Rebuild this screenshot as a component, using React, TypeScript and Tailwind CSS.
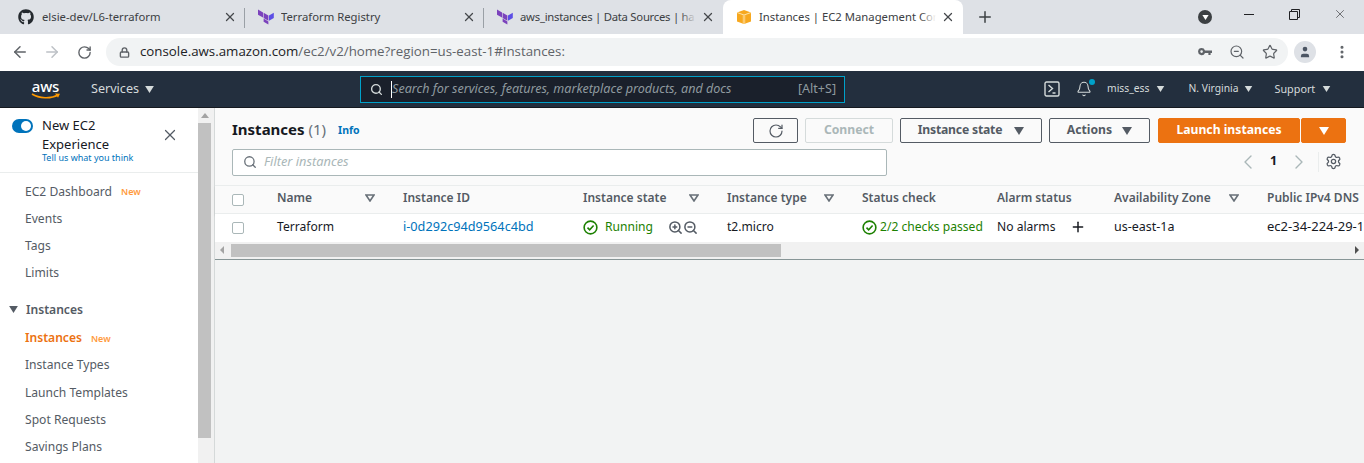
import {
  ArrowLeft,
  ArrowRight,
  Bell,
  ChevronLeft,
  ChevronRight,
  Lock,
  MoreVertical,
  Plus,
  RotateCw,
  Search,
  Settings,
  Star,
  User,
  X,
  ZoomIn,
  ZoomOut,
} from 'lucide-react';
import { FaGithub } from 'react-icons/fa';
import type { ReactNode } from 'react';

const TerraformIcon = () => (
  <svg width="16" height="16" viewBox="0 0 16 16" className="shrink-0">
    <path d="M0 0.500l5 2.900v5.200L0 5.700z" fill="#7b42bc" />
    <path d="M5.600 3.700l4.800 2.800v5.200L5.600 8.900z" fill="#7b42bc" />
    <path d="M5.600 9.600l4.800 2.800v3.100L5.600 12.700z" fill="#7b42bc" />
    <path d="M11 6.500l4.800-2.800v5.200L11 11.700z" fill="#5c4ee5" />
  </svg>
);

const BoxIcon = () => (
  <svg width="16" height="16" viewBox="0 0 16 16" className="shrink-0">
    <path d="M1 3.500L8 1l7 2.500v9L8 15l-7-2.500z" fill="#f7a81f" />
    <path d="M1 3.500L8 6l7-2.500" fill="none" stroke="#fde3a8" strokeWidth="1" />
    <path d="M6.700 6v9h2.600V6z" fill="#fbc970" />
  </svg>
);

const KeyIcon = () => (
  <svg width="14" height="8" viewBox="0 0 14 8" className="shrink-0">
    <path d="M3.600 0a3.600 3.600 0 0 1 3.400 2.400h7V5h-1.400v2h-2.200V5H7a3.600 3.600 0 1 1-3.400-5zm0 2.300a1.300 1.300 0 1 0 0 2.600 1.300 1.300 0 0 0 0-2.600z" fill="currentColor" />
  </svg>
);

const Caret = ({ className }: { className: string }) => (
  <svg width="10" height="8" viewBox="0 0 10 8" className={className}>
    <path d="M0 0h10L5 8z" fill="currentColor" />
  </svg>
);

const SortIcon = () => (
  <svg width="10" height="8" viewBox="0 0 10 8" className="shrink-0 text-[#687078]">
    <path d="M1 1h8L5 7z" fill="none" stroke="currentColor" strokeWidth="1.600" />
  </svg>
);

const CheckCircle = () => (
  <svg width="15" height="15" viewBox="0 0 16 16" className="shrink-0" fill="none" stroke="#1d8102" strokeWidth="1.700">
    <circle cx="8" cy="8" r="6.800" />
    <path d="M4.800 8.200l2.300 2.300 4.200-4.600" />
  </svg>
);

type TabProps = { icon: ReactNode; title: string; active?: boolean; fade?: boolean; tight?: boolean; width: string; divider?: boolean };

const Tab = ({ icon, title, active, fade, tight, width, divider }: TabProps) => (
  <div className={`${width} relative flex h-[34px] shrink-0 items-center pl-[13px] pr-[8px] ${active ? 'rounded-t-[8px] bg-white' : ''}`}>
    {icon}
    <div className={`relative ml-[7px] min-w-0 flex-1 overflow-hidden whitespace-nowrap text-[11.300px] text-[#3c4043] ${tight ? 'tracking-[-0.250px]' : ''}`}>
      {title}
      {fade && (
        <div className={`absolute inset-y-0 right-0 w-[16px] bg-gradient-to-r from-transparent ${active ? 'to-white' : 'to-[#dee1e6]'}`} />
      )}
    </div>
    <X size={14} strokeWidth={2.200} className="ml-[5px] shrink-0 text-[#45484c]" />
    {divider && <div className="absolute right-0 top-[8px] h-[20px] w-px bg-[#9aa0a6]" />}
  </div>
);

const TabStrip = () => (
  <div className="flex h-[34px] items-center bg-[#dee1e6]">
    <Tab width="w-[245px]" divider icon={<div className="ml-[5px] mr-[1px]"><FaGithub size={16} className="text-[#24292e]" /></div>} title="elsie-dev/L6-terraform" />
    <Tab width="w-[239px]" divider icon={<TerraformIcon />} title="Terraform Registry" />
    <Tab width="w-[239px]" fade tight icon={<TerraformIcon />} title="aws_instances | Data Sources | ha" />
    <Tab width="w-[240px]" active fade icon={<BoxIcon />} title="Instances | EC2 Management Con" />
    <Plus size={18} strokeWidth={2} className="ml-[13px] text-[#3c4043]" />
    <div className="ml-auto flex items-center">
      <div className="mr-[32px] flex h-[14px] w-[14px] items-center justify-center rounded-full bg-[#3c4043]">
        <Caret className="h-[5px] w-[7px] text-white" />
      </div>
      <div className="mb-[6px] h-px w-[10px] bg-[#202124]" />
      <svg width="11" height="11" viewBox="0 0 11 11" className="mb-[6px] ml-[35px]" fill="none" stroke="#202124">
        <path d="M0.500 2.500h8v8h-8zM2.500 2.500v-2h8v8h-2" />
      </svg>
      <X size={14} strokeWidth={1} className="mb-[6px] ml-[33px] mr-[17px] text-[#202124]" />
    </div>
  </div>
);

const AddressBar = () => (
  <div className="flex h-[37px] items-center border-b border-[#ffffff] bg-white">
    <ArrowLeft size={18} strokeWidth={2} className="ml-[11px] text-[#5f6368]" />
    <ArrowRight size={18} strokeWidth={2} className="ml-[14px] text-[#bdc1c6]" />
    <RotateCw size={15} strokeWidth={2.200} className="ml-[16px] text-[#5f6368]" />
    <div className="ml-[14px] flex h-[28px] w-[1182px] items-center rounded-full bg-[#f1f3f4] pl-[13px] pr-[10px]">
      <Lock size={11} strokeWidth={3} className="text-[#5f6368]" />
      <div className="ml-[10px] whitespace-nowrap text-[13.300px] text-[#5f6368] [font-family:'Open_Sans',sans-serif]">
        <span className="text-[#202124]">console.aws.amazon.com</span>/ec2/v2/home?region=us-east-1#Instances:
      </div>
      <div className="ml-auto flex items-center gap-[17px] text-[#5f6368]">
        <KeyIcon />
        <ZoomOut size={16} strokeWidth={1.800} />
        <Star size={16} strokeWidth={1.800} />
      </div>
    </div>
    <div className="ml-[6px] flex h-[22px] w-[22px] items-center justify-center rounded-full bg-[#dee1e6]">
      <User size={14} fill="#4b5563" strokeWidth={0} />
    </div>
    <MoreVertical size={16} strokeWidth={2.600} className="ml-[18px] text-[#5f6368]" />
  </div>
);

const TopNav = () => (
  <div className="flex h-[37px] items-center border-b border-[#15191f] bg-[#232f3e] text-[#d5dbdb]">
    <div className="ml-[29px] flex w-[33px] flex-col items-center">
      <div className="h-[14px] text-[15px] font-medium leading-[14px] tracking-[-0.200px] text-white">aws</div>
      <svg width="30" height="7" viewBox="0 0 30 7">
        <path d="M1 1c7 4.500 19 5 26 1" fill="none" stroke="#f90" strokeWidth="1.600" />
        <path d="M24 0.500l5 0.300-2 4z" fill="#f90" />
      </svg>
    </div>
    <div className="ml-[29px] text-[12.600px]">Services</div>
    <Caret className="ml-[6px] h-[7px] w-[9px] text-[#d5dbdb]" />
    <div className="ml-[206px] flex h-[27px] w-[485px] items-center border border-[#00a1c9] bg-[#1a202b] pl-[9px] pr-[8px] text-[12.550px]">
      <Search size={13} strokeWidth={2.500} className="text-[#d5dbdb]" />
      <div className="ml-[8px] h-[17px] w-px bg-white" />
      <span className="italic text-[#8f9a9f]">Search for services, features, marketplace products, and docs</span>
      <span className="ml-auto text-[#8f9a9f]">[Alt+S]</span>
    </div>
    <svg width="16" height="16" viewBox="0 0 16 16" className="ml-[199px]" fill="none" stroke="#d5dbdb" strokeWidth="1.400">
      <rect x="1" y="1" width="14" height="14" rx="1.500" />
      <path d="M4.500 4l4 3.500-4 3.500M8.500 12h3" />
    </svg>
    <div className="relative ml-[16px] flex">
      <Bell size={16} strokeWidth={1.600} />
      <div className="absolute right-[-3px] top-[-2px] h-[6px] w-[6px] rounded-full bg-[#00a1c9]" />
    </div>
    <div className="ml-[15px] text-[10.300px]">miss_ess</div>
    <Caret className="ml-[7px] h-[6px] w-[9px] text-[#d5dbdb]" />
    <div className="ml-[23px] text-[10.300px]">N. Virginia</div>
    <Caret className="ml-[5px] h-[6px] w-[9px] text-[#d5dbdb]" />
    <div className="ml-[22px] text-[10.800px]">Support</div>
    <Caret className="ml-[7px] h-[6px] w-[9px] text-[#d5dbdb]" />
  </div>
);

const NavLink = ({ label, badge, active }: { label: string; badge?: boolean; active?: boolean }) => (
  <div className="flex h-[27.200px] items-center pl-[25px] text-[12.100px]">
    <span className={active ? 'font-semibold text-[#ec7211]' : 'text-[#545b64]'}>{label}</span>
    {badge && <span className="ml-[9px] text-[9px] font-semibold text-[#ff9a3c]">New</span>}
  </div>
);

const Sidebar = () => (
  <div className="flex w-[215px] shrink-0">
    <div className="h-full w-[198px] bg-white">
      <div className="relative h-[65px] border-b border-[#eaeded] pl-[12px] pt-[8px]">
        <div className="flex">
          <div className="mt-[3px] flex h-[14px] w-[21px] items-center justify-end rounded-full bg-[#0073bb] pr-[2px]">
            <div className="h-[10px] w-[10px] rounded-full bg-white" />
          </div>
          <div className="ml-[9px] text-[13px] leading-[18.500px] text-[#16191f]">
            New EC2
            <br />
            Experience
            <div className="text-[9px] leading-[10px] text-[#0073bb]">Tell us what you think</div>
          </div>
        </div>
        <X size={18} strokeWidth={1.600} className="absolute right-[19px] top-[18px] text-[#545b64]" />
      </div>
      <div className="pt-[5px]">
        <NavLink label="EC2 Dashboard" badge />
        <NavLink label="Events" />
        <NavLink label="Tags" />
        <NavLink label="Limits" />
      </div>
      <div className="mb-px mt-[9px] flex h-[28px] items-center pl-[9px] text-[12.100px] font-semibold text-[#545b64]">
        <Caret className="mr-[8px] h-[7px] w-[9px] text-[#545b64]" />
        Instances
      </div>
      <NavLink label="Instances" badge active />
      <NavLink label="Instance Types" />
      <NavLink label="Launch Templates" />
      <NavLink label="Spot Requests" />
      <NavLink label="Savings Plans" />
    </div>
    <div className="flex h-full w-[17px] flex-col items-center border-r border-[#d5d9d9] bg-[#f1f1f1] pr-[3px]">
      <svg width="8" height="5" viewBox="0 0 8 5" className="mt-[5px] shrink-0">
        <path d="M4 0l4 5H0z" fill="#a3a3a3" />
      </svg>
      <div className="mt-[5px] h-[315px] w-[13px] bg-[#c1c1c1]" />
    </div>
  </div>
);

const btn = 'flex h-[25px] items-center justify-center rounded-[2px] border text-[12.200px] font-bold';

const ActionBar = () => (
  <div className="flex items-center pl-[17px] pr-[18px]">
    <div className="mb-[2px] text-[15px] font-bold text-[#16191f]">
      Instances <span className="font-normal text-[#687078]">(1)</span>
    </div>
    <div className="ml-[12px] text-[10.500px] font-bold text-[#0073bb]">Info</div>
    <div className={`${btn} ml-auto w-[45px] border-[#545b64] text-[#545b64]`}>
      <RotateCw size={16} strokeWidth={1.800} />
    </div>
    <div className={`${btn} ml-[7px] w-[88px] border-[#d5dbdb] text-[#aab7b8]`}>Connect</div>
    <div className={`${btn} ml-[7px] w-[142px] gap-[12px] border-[#545b64] tracking-[-0.200px] text-[#545b64]`}>
      Instance state
      <Caret className="h-[8px] w-[10px] text-[#545b64]" />
    </div>
    <div className={`${btn} ml-[7px] w-[101px] gap-[10px] border-[#545b64] text-[#545b64]`}>
      Actions
      <Caret className="h-[8px] w-[10px] text-[#545b64]" />
    </div>
    <div className={`${btn} ml-[8px] w-[142px] border-[#ec7211] bg-[#ec7211] text-white`}>Launch instances</div>
    <div className={`${btn} ml-px w-[45px] border-[#ec7211] bg-[#ec7211] text-white`}>
      <Caret className="h-[8px] w-[10px] text-white" />
    </div>
  </div>
);

const FilterBar = () => (
  <div className="mt-[6px] flex h-[27px] items-center pl-[17px]">
    <div className="flex h-[27px] w-[655px] items-center rounded-[2px] border border-[#aab7b8] bg-white pb-[2px] pl-[10px] text-[12.800px] italic text-[#aab7b8]">
      <Search size={14} strokeWidth={2.200} className="mr-[7px] text-[#687078]" />
      Filter instances
    </div>
    <div className="mb-[2px] ml-auto flex items-center pr-[22px]">
      <ChevronLeft size={24} strokeWidth={1.400} className="text-[#aab7b8]" />
      <div className="mx-[10px] w-[7px] text-[12.500px] font-bold text-[#16191f]">1</div>
      <ChevronRight size={24} strokeWidth={1.400} className="text-[#aab7b8]" />
      <div className="ml-[7px] h-[20px] w-px bg-[#eaeded]" />
      <Settings size={17} strokeWidth={1.800} className="ml-[6px] text-[#545b64]" />
    </div>
  </div>
);

type Col = { name: string; width: string; sort?: boolean };

const columns: Col[] = [
  { name: 'Name', width: 'w-[126px]', sort: true },
  { name: 'Instance ID', width: 'w-[180px]' },
  { name: 'Instance state', width: 'w-[144px]', sort: true },
  { name: 'Instance type', width: 'w-[135px]', sort: true },
  { name: 'Status check', width: 'w-[135px]' },
  { name: 'Alarm status', width: 'w-[117px]' },
  { name: 'Availability Zone', width: 'w-[153px]', sort: true },
  { name: 'Public IPv4 DNS', width: 'w-[111px]' },
];

const Checkbox = () => <div className="h-[12px] w-[12px] rounded-[2px] border border-[#aab7b8] bg-white" />;

const cell = 'flex h-full shrink-0 items-center overflow-hidden whitespace-nowrap pb-[2px] pl-[14px]';

const InstancesTable = () => (
  <div className="mt-[9px]">
    <div className="flex h-[29px] items-center border-y border-[#eaeded] bg-[#fafafa] text-[12px] font-semibold text-[#545b64] shadow-[0_2px_2px_rgba(0,0,0,0.1)]">
      <div className="flex h-full w-[48px] shrink-0 items-center pl-[17px]">
        <Checkbox />
      </div>
      {columns.map((col) => (
        <div key={col.name} className={`${cell} ${col.width} justify-between pb-[3px] pr-[14px]`}>
          {col.name}
          {col.sort && <SortIcon />}
        </div>
      ))}
    </div>
    <div className="flex h-[28px] items-center bg-white text-[12.100px] text-[#16191f]">
      <div className="flex h-full w-[48px] shrink-0 items-center pl-[17px]">
        <Checkbox />
      </div>
      <div className={`${cell} w-[126px]`}>Terraform</div>
      <div className={`${cell} w-[180px] text-[12.700px] text-[#0073bb]`}>i-0d292c94d9564c4bd</div>
      <div className={`${cell} w-[144px] text-[#1d8102]`}>
        <CheckCircle />
        <span className="ml-[7px]">Running</span>
        <ZoomIn size={15} strokeWidth={2.400} className="ml-[15px] text-[#545b64]" />
        <ZoomOut size={15} strokeWidth={2.400} className="text-[#545b64]" />
      </div>
      <div className={`${cell} w-[135px]`}>t2.micro</div>
      <div className={`${cell} w-[135px] text-[#1d8102]`}>
        <CheckCircle />
        <span className="ml-[3px]">2/2 checks passed</span>
      </div>
      <div className={`${cell} w-[117px]`}>
        No alarms
        <Plus size={16} strokeWidth={2.200} className="ml-[15px]" />
      </div>
      <div className={`${cell} w-[153px] text-[12.500px]`}>us-east-1a</div>
      <div className={`${cell} w-[111px] text-[13px]`}>ec2-34-224-29-1</div>
    </div>
    <div className="flex h-[18px] items-center border-b border-[#879596] bg-[#f1f1f1] pb-[1px]">
      <svg width="4" height="8" viewBox="0 0 4 8" className="ml-[5px] shrink-0">
        <path d="M4 0v8L0 4z" fill="#a3a3a3" />
      </svg>
      <div className="ml-[7px] h-[13px] w-[550px] bg-[#c1c1c1]" />
      <svg width="4" height="8" viewBox="0 0 4 8" className="ml-auto mr-[5px] shrink-0">
        <path d="M0 0v8l4-4z" fill="#505050" />
      </svg>
    </div>
  </div>
);

export default function App() {
  return (
    <div className="flex h-[463px] w-[1364px] flex-col overflow-hidden bg-white [font-family:'Noto_Sans',sans-serif]">
      <TabStrip />
      <AddressBar />
      <TopNav />
      <div className="flex min-h-0 flex-1">
        <Sidebar />
        <div className="min-w-0 flex-1 bg-[#f2f3f3]">
          <div className="bg-[#fafafa] pt-[10px]">
            <ActionBar />
            <FilterBar />
            <InstancesTable />
          </div>
        </div>
      </div>
    </div>
  );
}
